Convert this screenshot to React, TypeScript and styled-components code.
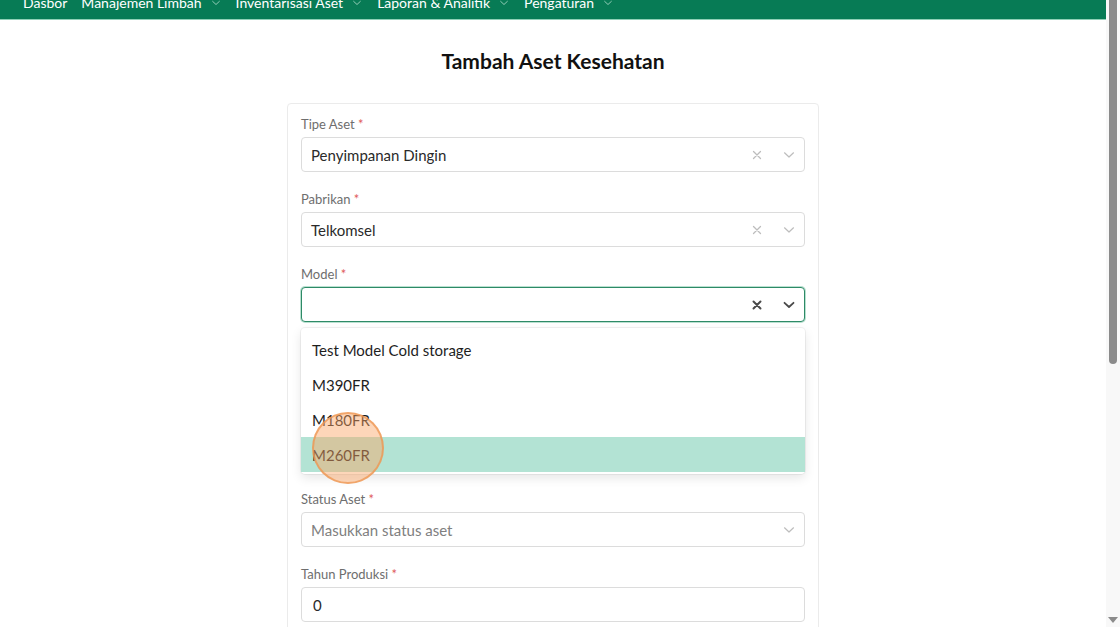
import React from 'react';
import styled, {createGlobalStyle} from "styled-components";

const GlobalStyle = createGlobalStyle`
  html, body {
    margin: 0;
    padding: 0;
    background: #ffffff;
    font-family: Lato, "Noto Sans", sans-serif;
  }
  * {
    box-sizing: border-box;
  }
`

type NavItemType = {
    title: string;
    hasMenu: boolean;
}

const navItems: NavItemType[] = [
    {title: "Dasbor", hasMenu: false},
    {title: "Manajemen Limbah", hasMenu: true},
    {title: "Inventarisasi Aset", hasMenu: true},
    {title: "Laporan & Analitik", hasMenu: true},
    {title: "Pengaturan", hasMenu: true},
]

const modelOptions = ["Test Model Cold storage", "M390FR", "M180FR", "M260FR"];

const CrossIcon = ({strong}: { strong?: boolean }) => (
    <svg width="10" height="10" viewBox="0 0 10 10">
        <path d="M1.5 1.5 L8.5 8.5 M8.5 1.5 L1.5 8.5" stroke="currentColor"
              strokeWidth={strong ? 2 : 1.3} strokeLinecap="round"/>
    </svg>
)

const ChevronIcon = ({strong}: { strong?: boolean }) => (
    <svg width="12" height="8" viewBox="0 0 12 8">
        <path d="M1.5 1.8 L6 6 L10.5 1.8" stroke="currentColor" fill="none"
              strokeWidth={strong ? 1.8 : 1.2} strokeLinecap="round" strokeLinejoin="round"/>
    </svg>
)

type SelectPropsType = {
    label: string;
    value?: string;
    placeholder?: string;
    clearable?: boolean;
    focused?: boolean;
}

const SelectField = (props: SelectPropsType) => (
    <FieldLabel>
        <LabelText>{props.label} <Required>*</Required></LabelText>
        <SelectBox focused={props.focused}>
            <SelectValue muted={!props.value}>{props.value || props.placeholder}</SelectValue>
            <Indicators focused={props.focused}>
                {props.clearable && <CrossIcon strong={props.focused}/>}
                <ChevronIcon strong={props.focused}/>
            </Indicators>
        </SelectBox>
    </FieldLabel>
)

export default function App() {
    return (
        <>
            <GlobalStyle/>
            <Screen>
                <Viewport>
                    <TopBar>
                        {navItems.map(item => (
                            <NavItem key={item.title}>
                                {item.title}
                                {item.hasMenu && <NavChevron><ChevronIcon/></NavChevron>}
                            </NavItem>
                        ))}
                    </TopBar>
                    <Main>
                        <PageTitle>Tambah Aset Kesehatan</PageTitle>
                        <FormCard>
                            <SelectField label="Tipe Aset" value="Penyimpanan Dingin" clearable/>
                            <SelectField label="Pabrikan" value="Telkomsel" clearable/>
                            <MenuAnchor>
                                <SelectField label="Model" clearable focused/>
                                <Menu>
                                    {modelOptions.map(option => (
                                        <MenuOption key={option} active={option === "M260FR"}>{option}</MenuOption>
                                    ))}
                                    <ClickMarker/>
                                </Menu>
                            </MenuAnchor>
                            <SelectField label="Nomor Seri" placeholder="Masukkan nomor seri"/>
                            <SelectField label="Lokasi" placeholder="Masukkan lokasi"/>
                            <SelectField label="Status Aset" placeholder="Masukkan status aset"/>
                            <FieldLabel>
                                <LabelText>Tahun Produksi <Required>*</Required></LabelText>
                                <TextInput defaultValue="0"/>
                            </FieldLabel>
                        </FormCard>
                    </Main>
                </Viewport>
                <ScrollTrack>
                    <ScrollThumb/>
                    <ScrollArrow/>
                </ScrollTrack>
            </Screen>
        </>
    );
}

const Screen = styled.div`
  display: flex;
  width: 1120px;
  height: 627px;
  overflow: hidden;
`

const Viewport = styled.div`
  flex: 1;
  min-width: 0;
  overflow: hidden;
`

const TopBar = styled.nav`
  height: 20px;
  background-color: #077b55;
  border-bottom: 1px solid #8fd0b6;
  display: flex;
  align-items: flex-end;
  padding: 0 0 8px 23px;
  gap: 14px;
  overflow: hidden;
`

const NavItem = styled.div`
  display: flex;
  align-items: center;
  gap: 8px;
  color: #ffffff;
  font-size: 14px;
  line-height: 17px;
  white-space: nowrap;
`

const NavChevron = styled.span`
  display: flex;
  color: #9fd4bf;
  transform: scale(0.75);
`

const Main = styled.main`
  display: flex;
  flex-direction: column;
  align-items: center;
  padding-top: 29px;
`

const PageTitle = styled.h1`
  margin: 0 0 30px;
  font-size: 21px;
  line-height: 24px;
  font-weight: 700;
  color: #111111;
`

const FormCard = styled.section`
  width: 532px;
  border: 1px solid #ebebeb;
  border-radius: 4px;
  padding: 12px 13px 20px;
  display: flex;
  flex-direction: column;
  gap: 19px;
`

const FieldLabel = styled.label`
  display: flex;
  flex-direction: column;
  gap: 5px;
`

const LabelText = styled.span`
  font-size: 13px;
  line-height: 16px;
  color: #6e6e6e;
`

const Required = styled.span`
  color: #e05a5a;
`

const SelectBox = styled.div<{ focused?: boolean }>`
  height: 35px;
  border: 1px solid ${({focused}) => focused ? "#2e8a67" : "#dcdcdc"};
  box-shadow: ${({focused}) => focused ? "0 0 0 1px #b9e0d0" : "none"};
  border-radius: 4px;
  display: flex;
  align-items: center;
  padding: 0 9px 0 9px;
  background: #ffffff;
`

const SelectValue = styled.span<{ muted?: boolean }>`
  flex: 1;
  font-size: 15px;
  color: ${({muted}) => muted ? "#808080" : "#2a2a2a"};
`

const Indicators = styled.div<{ focused?: boolean }>`
  display: flex;
  align-items: center;
  gap: 21px;
  color: ${({focused}) => focused ? "#4a4a4a" : "#bdbdbd"};
`

const MenuAnchor = styled.div`
  position: relative;
`

const Menu = styled.div`
  position: absolute;
  left: 0;
  right: 0;
  top: calc(100% + 6px);
  z-index: 5;
  background: #ffffff;
  border-radius: 4px;
  padding: 4px 0 2px;
  box-shadow: 0 0 0 1px rgba(0, 0, 0, 0.05), 0 4px 11px rgba(0, 0, 0, 0.1);
`

const MenuOption = styled.div<{ active?: boolean }>`
  height: 35px;
  display: flex;
  align-items: center;
  padding-left: 11px;
  font-size: 15px;
  color: #1e1e1e;
  background: ${({active}) => active ? "#b3e3d4" : "transparent"};
`

const ClickMarker = styled.span`
  position: absolute;
  left: 11px;
  top: 84px;
  width: 72px;
  height: 72px;
  border-radius: 50%;
  background: rgba(250, 165, 100, 0.45);
  border: 2px solid rgba(238, 150, 80, 0.75);
  pointer-events: none;
`

const TextInput = styled.input`
  height: 35px;
  border: 1px solid #dcdcdc;
  border-radius: 4px;
  padding: 0 11px;
  font-family: inherit;
  font-size: 15px;
  color: #2a2a2a;
  outline: none;
`

const ScrollTrack = styled.div`
  width: 14px;
  background: #f8f8f8;
  display: flex;
  flex-direction: column;
  align-items: center;
  justify-content: space-between;
  padding-bottom: 4px;
`

const ScrollThumb = styled.div`
  width: 8px;
  height: 364px;
  background: #8b8b8b;
  border-radius: 0 0 4px 4px;
`

const ScrollArrow = styled.div`
  width: 0;
  height: 0;
  border-left: 5px solid transparent;
  border-right: 5px solid transparent;
  border-top: 6px solid #8b8b8b;
`
